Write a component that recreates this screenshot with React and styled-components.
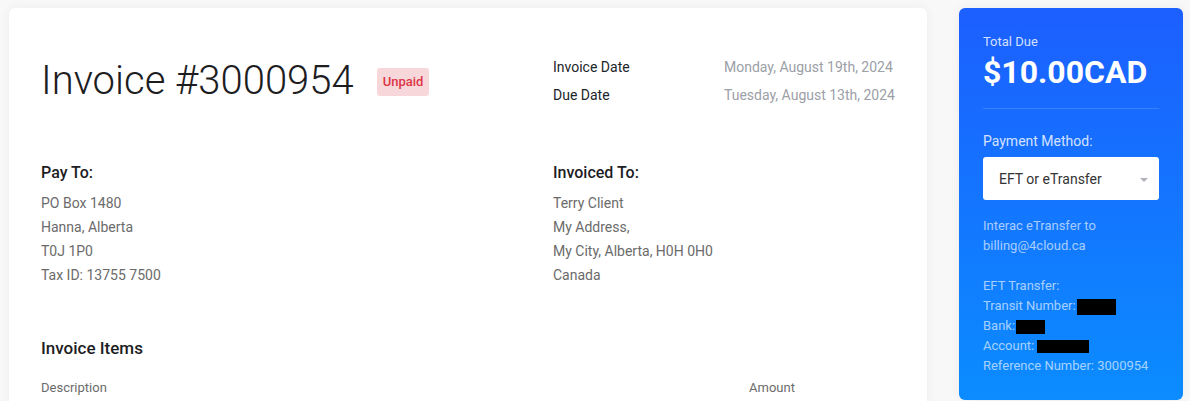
import React from "react";
import styled, { createGlobalStyle } from "styled-components";

const Global = createGlobalStyle`
  html, body { margin: 0; padding: 0; }
  body {
    background: #f8f8f8;
    font-family: Roboto, "Liberation Sans", Arial, sans-serif;
    color: #212529;
    -webkit-font-smoothing: antialiased;
  }
  * { box-sizing: border-box; }
`;

const Page = styled.div`
  display: flex;
  align-items: flex-start;
  gap: 32px;
  padding: 8px 7px 0 9px;
  height: 401px;
  overflow: hidden;
`;

const Card = styled.main`
  flex: 0 0 917px;
  background: #fff;
  border-radius: 6px;
  box-shadow: 0 0 12px rgba(0, 0, 0, 0.05);
  padding: 45px 32px 60px 32px;
  min-height: 460px;
`;

const TwoCol = styled.div`
  display: grid;
  grid-template-columns: 512px 1fr;
  align-items: ${(p) => p.$align || "start"};
  margin-top: ${(p) => p.$mt || 0}px;
`;

const TitleRow = styled.div`
  display: flex;
  align-items: center;
  gap: 23px;
`;

const Title = styled.h1`
  margin: 0;
  font-size: 40px;
  font-weight: 300;
  line-height: 56px;
  color: #1d1d1f;
`;

const Badge = styled.span`
  display: inline-block;
  background: #f8d7da;
  color: #dc3545;
  font-size: 13px;
  font-weight: 500;
  line-height: 28px;
  padding: 0 6px;
  border-radius: 3px;
  margin-top: 2px;
`;

const DateTable = styled.div`
  display: grid;
  grid-template-columns: 171px auto;
  font-size: 14px;
  line-height: 28px;
  white-space: nowrap;
`;

const DateLabel = styled.span`
  color: #212529;
`;

const DateValue = styled.span`
  color: #9ca0a7;
`;

const Heading = styled.h3`
  margin: 0 0 6px;
  font-size: ${(p) => p.$size || 16}px;
  font-weight: 500;
  line-height: 24px;
  color: #1d1d1f;
`;

const Address = styled.div`
  font-size: 14px;
  line-height: 24px;
  color: #6b6b6b;
`;

const Section = styled.section`
  margin-top: 49px;
`;

const ItemsHead = styled.div`
  display: grid;
  grid-template-columns: 708px 1fr;
  margin-top: 16px;
  font-size: 13px;
  line-height: 24px;
  color: #6b6b6b;
`;

const Panel = styled.aside`
  flex: 0 0 224px;
  height: 392px;
  border-radius: 6px;
  background: linear-gradient(180deg, #1c5fff 0%, #0b8cff 100%);
  padding: 24px 24px 24px;
  color: #fff;
  box-shadow: 0 0 12px rgba(0, 0, 0, 0.05);
`;

const SmallLabel = styled.div`
  font-size: 13px;
  line-height: 20px;
  color: rgba(255, 255, 255, 0.82);
`;

const Amount = styled.div`
  font-size: 32px;
  font-weight: 700;
  line-height: 40px;
  color: #fff;
`;

const Divider = styled.hr`
  border: 0;
  border-top: 1px solid rgba(255, 255, 255, 0.15);
  margin: 16px 0 22px;
`;

const MethodLabel = styled.div`
  font-size: 14px;
  line-height: 20px;
  color: rgba(255, 255, 255, 0.82);
`;

const Select = styled.div`
  margin-top: 6px;
  height: 43px;
  background: #fff;
  border-radius: 3px;
  display: flex;
  align-items: center;
  justify-content: space-between;
  padding: 0 11px 0 16px;
  font-size: 14px;
  color: #333;
`;

const Caret = styled.span`
  width: 0;
  height: 0;
  border-left: 4px solid transparent;
  border-right: 4px solid transparent;
  border-top: 4px solid #b0b4ba;
  margin-top: 2px;
`;

const Info = styled.div`
  margin-top: 16px;
  font-size: 13px;
  line-height: 20px;
  color: rgba(255, 255, 255, 0.64);
`;

const Line = styled.div`
  min-height: 20px;
  white-space: nowrap;
`;

const Redact = styled.span`
  display: inline-block;
  background: #000;
  width: ${(p) => p.$w}px;
  height: ${(p) => p.$h}px;
  vertical-align: middle;
  margin-left: ${(p) => p.$ml || 0}px;
`;

export default function App() {
  return (
    <>
      <Global />
      <Page>
        <Card>
          <TwoCol $align="center">
            <TitleRow>
              <Title>Invoice #3000954</Title>
              <Badge>Unpaid</Badge>
            </TitleRow>
            <DateTable>
              <DateLabel>Invoice Date</DateLabel>
              <DateValue>Monday, August 19th, 2024</DateValue>
              <DateLabel>Due Date</DateLabel>
              <DateValue>Tuesday, August 13th, 2024</DateValue>
            </DateTable>
          </TwoCol>

          <TwoCol $mt={52}>
            <div>
              <Heading>Pay To:</Heading>
              <Address>
                PO Box 1480
                <br />
                Hanna, Alberta
                <br />
                T0J 1P0
                <br />
                Tax ID: 13755 7500
              </Address>
            </div>
            <div>
              <Heading>Invoiced To:</Heading>
              <Address>
                Terry Client
                <br />
                My Address,
                <br />
                My City, Alberta, H0H 0H0
                <br />
                Canada
              </Address>
            </div>
          </TwoCol>

          <Section>
            <Heading $size={17}>Invoice Items</Heading>
            <ItemsHead>
              <span>Description</span>
              <span>Amount</span>
            </ItemsHead>
          </Section>
        </Card>

        <Panel>
          <SmallLabel>Total Due</SmallLabel>
          <Amount>$10.00CAD</Amount>
          <Divider />
          <MethodLabel>Payment Method:</MethodLabel>
          <Select>
            <span>EFT or eTransfer</span>
            <Caret />
          </Select>
          <Info>
            <Line>Interac eTransfer to</Line>
            <Line>billing@4cloud.ca</Line>
            <Line />
            <Line>EFT Transfer:</Line>
            <Line>
              Transit Number:<Redact $w={39} $h={16} $ml={1} />
            </Line>
            <Line>
              Bank:<Redact $w={29} $h={14} $ml={1} />
            </Line>
            <Line>
              Account: <Redact $w={52} $h={13} />
            </Line>
            <Line>Reference Number: 3000954</Line>
          </Info>
        </Panel>
      </Page>
    </>
  );
}
